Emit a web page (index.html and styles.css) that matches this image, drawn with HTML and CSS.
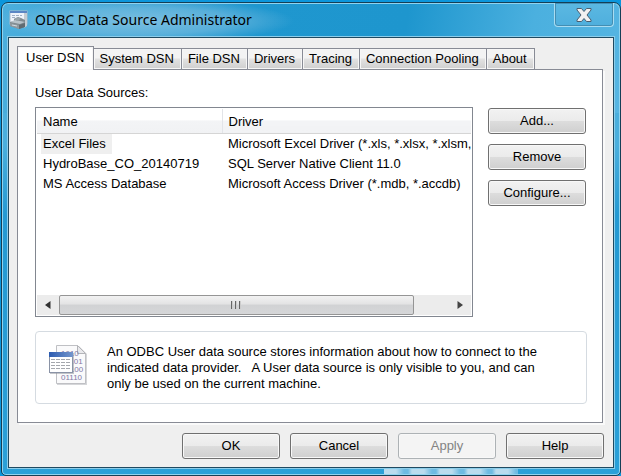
FILE: index.html
```html
<!DOCTYPE html>
<html lang="en">
<head>
<meta charset="utf-8">
<title>ODBC Data Source Administrator</title>
<link rel="stylesheet" href="styles.css">
</head>
<body>
<main class="window">
  <header class="titlebar">
    <svg class="app-icon" viewBox="0 0 20 20" aria-hidden="true">
      <rect x="1" y="1" width="17" height="13" fill="#eef3fa" stroke="#a9bccb"/>
      <rect x="1" y="1" width="17" height="2" fill="#5b86c4"/>
      <path d="M3 5.5h3M7 5.5h3M11 5.5h2M3 7.5h3" stroke="#9fb0c6"/>
      <path d="M15 3h3v13l-3 2z" fill="#c5ccd2"/>
      <path d="M1 12l4-1V9l4-2 3 1 4 2v7l-6 2-9-3z" fill="#7f898f"/>
      <path d="M1 12l5-2 10 2-5 2z" fill="#b9c3c9"/>
      <path d="M5 9l4-2 3 2-4 2z" fill="#98a4aa"/>
      <path d="M1 13l9 2v4l-9-3z" fill="#8f999f"/>
      <path d="M10 15l6-2v4l-6 2z" fill="#616b71"/>
      <path d="M3 15l5 1" stroke="#d3dbe0"/>
    </svg>
    <h1 class="title">ODBC Data Source Administrator</h1>
    <button class="close" type="button" aria-label="Close">
      <svg viewBox="0 0 16 14" aria-hidden="true">
        <path d="M1 .5h4.500L8 3.500 10.500.5H15v1.500L11 7l4 5v1.500h-4.500L8 10.500l-2.500 3H1V12l4-5-4-5z" fill="#f1f1f2" stroke="#4c5e70" stroke-linejoin="round"/>
      </svg>
    </button>
  </header>
  <div class="client">
    <div class="tabs" role="tablist">
      <button class="tab active" type="button" role="tab" aria-selected="true">User DSN</button>
      <button class="tab" type="button" role="tab">System DSN</button>
      <button class="tab" type="button" role="tab">File DSN</button>
      <button class="tab" type="button" role="tab">Drivers</button>
      <button class="tab" type="button" role="tab">Tracing</button>
      <button class="tab" type="button" role="tab">Connection Pooling</button>
      <button class="tab" type="button" role="tab">About</button>
    </div>
    <section class="panel" role="tabpanel">
      <h2 class="label" id="sources">User Data Sources:</h2>
      <div class="sources">
        <div class="listbox">
          <table class="list" aria-labelledby="sources">
            <colgroup><col class="col-name"><col></colgroup>
            <thead><tr><th>Name</th><th>Driver</th></tr></thead>
            <tbody>
              <tr><td><span class="selected">Excel Files</span></td><td>Microsoft Excel Driver (*.xls, *.xlsx, *.xlsm,</td></tr>
              <tr><td>HydroBase_CO_20140719</td><td>SQL Server Native Client 11.0</td></tr>
              <tr><td>MS Access Database</td><td>Microsoft Access Driver (*.mdb, *.accdb)</td></tr>
            </tbody>
          </table>
          <div class="scrollbar">
            <button class="arrow" type="button" aria-label="Scroll left"><svg viewBox="0 0 6 8"><path d="M5.500 0v8L0 4z" fill="#333"/></svg></button>
            <div class="track"><div class="thumb"><i></i><i></i><i></i></div></div>
            <button class="arrow" type="button" aria-label="Scroll right"><svg viewBox="0 0 6 8"><path d="M.5 0v8L6 4z" fill="#444"/></svg></button>
          </div>
        </div>
        <div class="actions">
          <button class="btn" type="button">Add...</button>
          <button class="btn" type="button">Remove</button>
          <button class="btn" type="button">Configure...</button>
        </div>
      </div>
      <div class="info">
        <svg class="info-icon" viewBox="0 0 40 42" aria-hidden="true">
          <defs><linearGradient id="bar" x2="1"><stop stop-color="#2b5bb0"/><stop offset="1" stop-color="#7596cc"/></linearGradient></defs>
          <path d="M9 2h22l8 8v31H9z" fill="#d5d6d9"/>
          <path d="M8.500 1.500h21l8 8v30h-29z" fill="#fafafb" stroke="#bfc0c4"/>
          <path d="M29.500 1.500v8h8z" fill="#e9e9ec" stroke="#b3b4b8"/>
          <g class="digits"><text x="13" y="12">1010</text><text x="13" y="20">01101</text><text x="13" y="28">10100</text><text x="13" y="36">01110</text></g>
          <rect x="2" y="9" width="24" height="21" fill="#8b8f98" opacity=".5"/>
          <rect x="1.500" y="8.500" width="23" height="20" fill="#fff" stroke="#8a93a6"/>
          <rect x="1" y="8" width="24" height="5" fill="url(#bar)"/>
          <path d="M3 15.500h20M3 18.500h20M3 21.500h20M3 24.500h20" stroke="#a4a7ad" stroke-dasharray="4 1"/>
        </svg>
        <p>An ODBC User data source stores information about how to connect to the indicated data provider.&nbsp;&nbsp; A User data source is only visible to you, and can only be used on the current machine.</p>
      </div>
    </section>
    <footer class="footer">
      <button class="btn" type="button">OK</button>
      <button class="btn" type="button">Cancel</button>
      <button class="btn" type="button" disabled>Apply</button>
      <button class="btn" type="button">Help</button>
    </footer>
  </div>
</main>
</body>
</html>
```
FILE: styles.css
```css
* { box-sizing: border-box; }

body {
  margin: 0;
  height: 100vh;
  padding: 2px 0 0 1px;
  background: #0b96dc;
  font: 13px/16px "Liberation Sans", Arial, sans-serif;
  color: #000;
}

button { font: inherit; color: inherit; padding: 0; margin: 0; }

.window {
  height: 100%;
  display: flex;
  flex-direction: column;
  padding: 0 6px 7px;
  border: 1px solid #153f56;
  border-radius: 7px 7px 5px 5px;
  box-shadow: inset 0 0 0 1px #8fd3ef;
  background:
    repeating-linear-gradient(90deg, #b9dcee 0 12px, #6dbbe2 20px 24px, #b9dcee 28px) right 102px bottom 1px / 134px 5px no-repeat,
    radial-gradient(ellipse 150px 22px at 142px 18px, #8bc5e3cc 0, #79bde099 60%, transparent 100%),
    linear-gradient(100deg, #4cafdd 0, #1f97cf 38%, #1e96ce 64%, #4bb0df 84%, #56b5e2 100%) top / 100% 110px no-repeat,
    linear-gradient(#4bafdd 30%, #2499d2 45%, #2aa0d8);
}

.titlebar {
  display: flex;
  align-items: flex-start;
  height: 34px;
  flex: none;
}

.app-icon { width: 20px; height: 20px; margin: 7px 0 0 1px; }

.title {
  flex: 1;
  margin: 6px 0 0 6px;
  font: 14px/22px "Noto Sans", "Open Sans", sans-serif;
}

.close {
  width: 60px;
  height: 24px;
  display: grid;
  place-items: center;
  background: linear-gradient(#5bb8e2, #4fafdd);
  border: 1px solid #a9dcf1;
  border-top: 0;
  border-radius: 0 0 4px 4px;
  box-shadow: inset 0 0 0 1px #438eb3;
}
.close svg { width: 16px; height: 14px; }

.client {
  flex: 1;
  display: flex;
  flex-direction: column;
  padding: 8px 10px 8px 8px;
  background: #efefef;
  border: 1px solid #1f4a61;
  box-shadow: 0 0 0 1px #8ccdea;
}

.tabs { display: flex; align-items: flex-end; height: 24px; flex: none; margin-bottom: -1px; z-index: 1; }

.tab {
  height: 22px;
  padding: 0 7px 0 6px;
  background: linear-gradient(#f3f3f3 0 45%, #e2e2e2 50%, #cfcfcf);
  border: 1px solid #888b95;
  box-shadow: inset 0 0 0 1px #f6f6f6;
  margin-left: -1px;
  white-space: nowrap;
}
.tab.active {
  height: 24px;
  padding: 0 8px 2px;
  background: #fff;
  border-bottom: 0;
  margin-left: 0;
}

.panel {
  flex: 1;
  padding: 15px 15px 16px 17px;
  background: #fff;
  border: 1px solid #888b95;
  box-shadow: 2px 2px 0 #fafafa;
}

.label { margin: 0 0 6px; font-size: 13px; font-weight: 400; }

.sources { display: flex; gap: 15px; }

.listbox {
  flex: 1;
  min-width: 0;
  height: 210px;
  display: flex;
  flex-direction: column;
  justify-content: space-between;
  padding: 1px;
  border: 1px solid #828790;
}

.list { width: 100%; table-layout: fixed; border-collapse: collapse; }
.col-name { width: 185px; }
.list th {
  height: 24px;
  padding: 2px 6px 0;
  text-align: left;
  font-weight: 400;
  background: linear-gradient(#fff 45%, #f3f4f6 50%, #f1f2f4);
  border-bottom: 1px solid #d5d5d5;
}
.list th:first-child { border-right: 1px solid #e2e4e8; }
.list td { height: 20px; padding: 0 0 0 6px; white-space: nowrap; }
.selected { display: inline-block; margin-left: -2px; padding: 2px 6px 2px 2px; background: #efefef; }

.scrollbar { display: flex; height: 20px; background: #ececec; }
.arrow { width: 22px; border: 0; background: none; display: grid; place-items: center; }
.arrow svg { width: 6px; height: 8px; }
.track { flex: 1; display: flex; }
.thumb {
  width: 91%;
  display: flex;
  justify-content: center;
  align-items: center;
  gap: 2px;
  border: 1px solid #959595;
  border-radius: 2px;
  background: linear-gradient(#f2f2f2, #e3e3e4 45%, #d1d2d4 50%, #d5d6d8);
}
.thumb i { width: 2px; height: 8px; background: linear-gradient(90deg, #666 50%, #ccc 50%); }

.actions { display: flex; flex-direction: column; gap: 10px; padding: 1px 1px 0 0; }

.btn {
  width: 98px;
  height: 26px;
  border: 1px solid #707070;
  border-radius: 3px;
  background: linear-gradient(#f2f2f2, #ebebeb 48%, #dddddd 50%, #cfcfcf);
  box-shadow: inset 0 0 0 1px #f8f8f8;
}
.btn:disabled { color: #838383; background: #f4f4f4; border-color: #adb2b5; }

.info {
  display: flex;
  gap: 19px;
  margin-top: 14px;
  height: 73px;
  padding: 12px 32px 0 12px;
  border: 1px solid #d5dbe1;
  border-radius: 4px;
}
.info-icon { width: 40px; height: 42px; flex: none; }
.info p { margin: 0; }
.digits { font: 8px "Liberation Sans", sans-serif; fill: #8078a6; }

.footer { display: flex; justify-content: flex-end; gap: 10px; margin: 10px -1px 0 0; flex: none; }
```
